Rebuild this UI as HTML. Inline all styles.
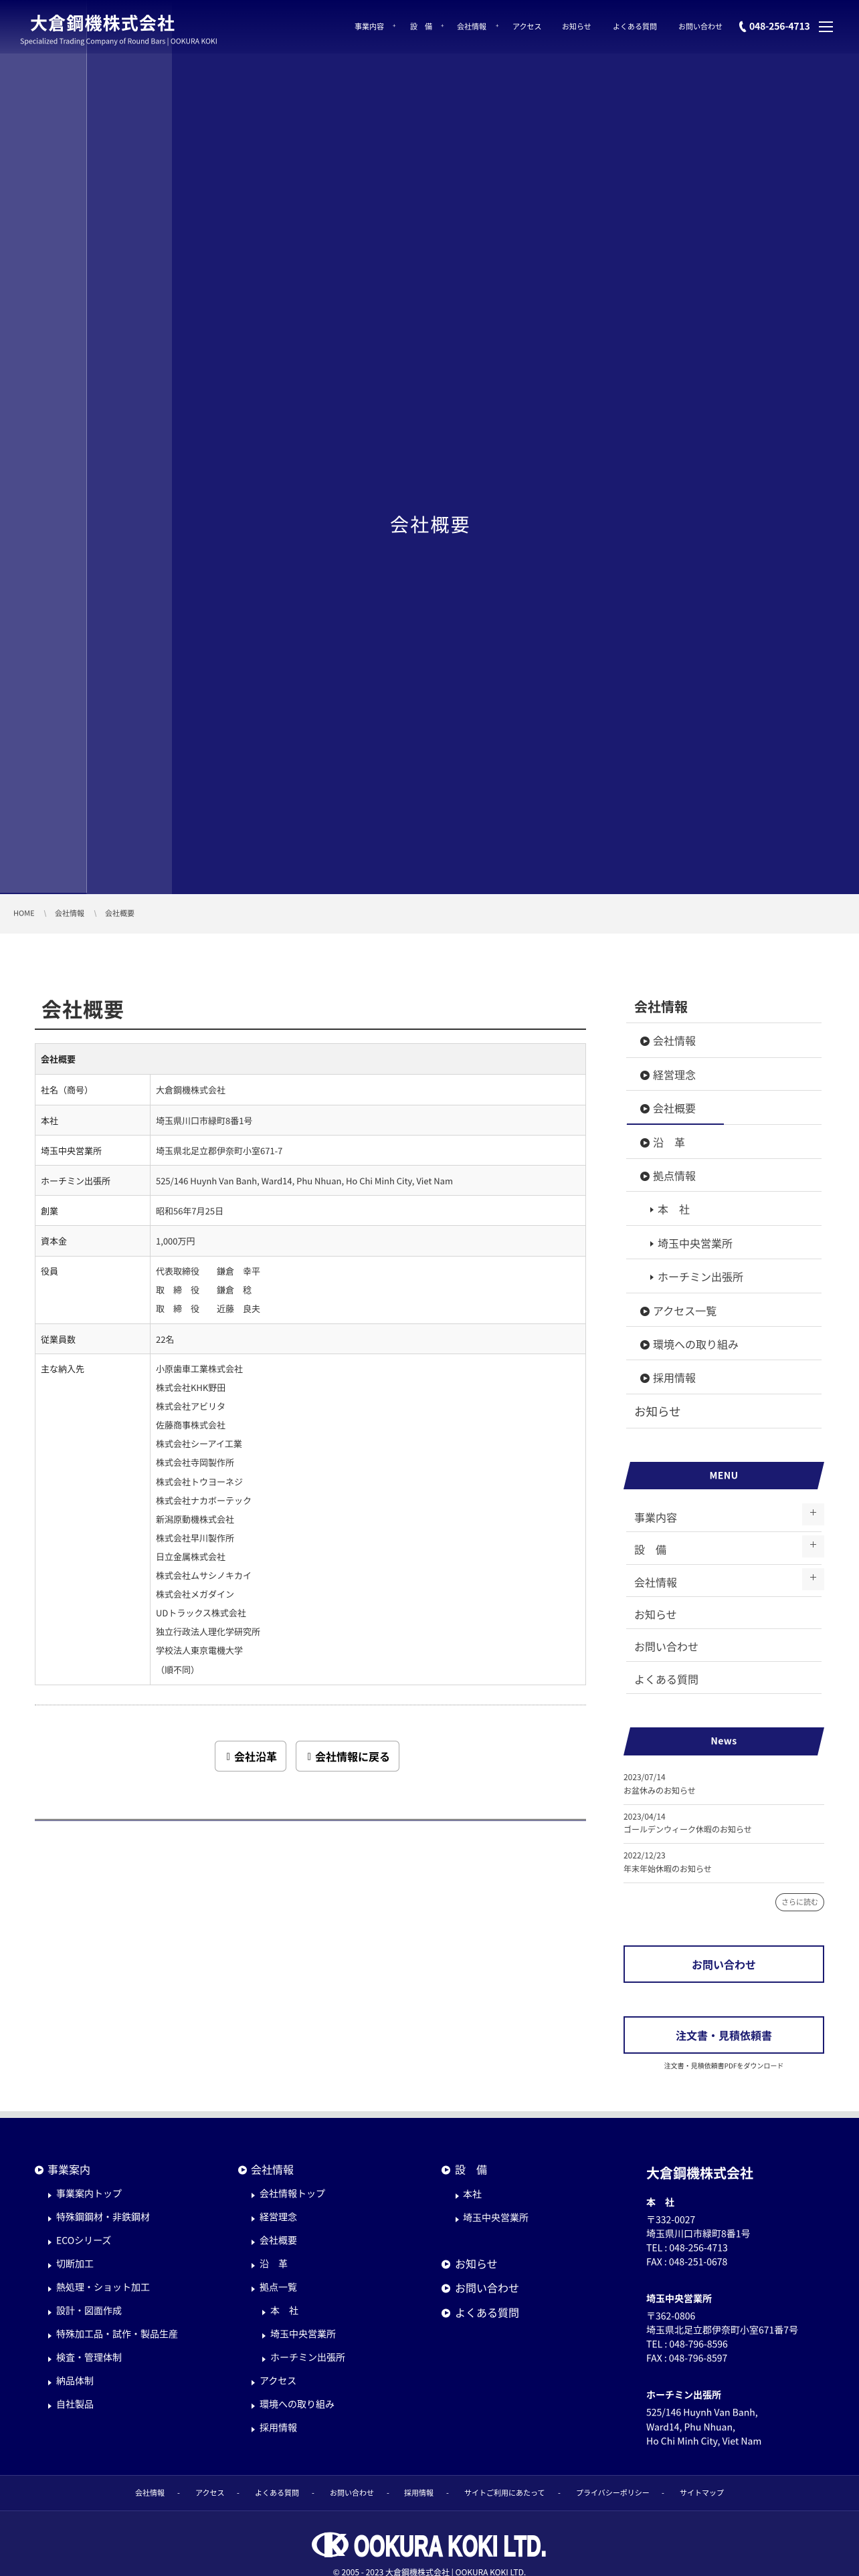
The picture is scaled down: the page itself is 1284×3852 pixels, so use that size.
<!DOCTYPE html>
<html lang="ja"><head><meta charset="utf-8"><title>会社概要 | 大倉鋼機株式会社</title>
<style>
*{box-sizing:border-box;margin:0;padding:0}
html,body{width:1284px;height:3852px;overflow:hidden;background:#fff}
body{position:relative;font-family:"Noto Sans CJK JP","Liberation Sans",sans-serif;color:#333}
.a{position:absolute}
.t{position:absolute;transform:translateY(-50%);white-space:nowrap;line-height:1.2}
.w{color:#fff}
.n{font-size:11px;color:#fff;top:40px}
.p{font-size:8px;color:#fff;top:39px}
.s{font-size:16px;color:#444}
.l{position:absolute;left:936px;width:292px;height:1px;background:#ddd}
.c{position:absolute;width:14px;height:14px;border-radius:50%;background:#333;transform:translateY(-50%)}
.c:after{content:"";position:absolute;left:5px;top:3.5px;border-left:6px solid #fff;border-top:3.5px solid transparent;border-bottom:3.5px solid transparent}
.r{position:absolute;transform:translateY(-50%);border-left:5px solid #333;border-top:4px solid transparent;border-bottom:4px solid transparent}
.band{position:absolute;left:932px;width:300px;background:#1a1a70;clip-path:polygon(10px 0,100% 0,290px 100%,0 100%)}
.band b{position:absolute;left:0;right:0;top:50%;transform:translateY(-50%);text-align:center;color:#fff;font-size:14px;letter-spacing:.4px;line-height:1.2}
.box{position:absolute;left:1199px;width:33px;background:#f7f7f7}
.box:before,.box:after{content:"";position:absolute;background:#555}
.box:before{left:12px;top:50%;width:9px;height:1px;margin-top:-4px}
.box:after{left:16px;top:50%;width:1px;height:9px;margin-top:-8px}
.d,.m{font-size:12px;color:#444}
.ft{font-size:16px;color:#fff}
.fs{font-size:14px;color:#fff}
.fc{position:absolute;width:13px;height:13px;border-radius:50%;background:#fff;transform:translateY(-50%)}
.fc:after{content:"";position:absolute;left:4.5px;top:3px;border-left:6px solid #00005a;border-top:3.5px solid transparent;border-bottom:3.5px solid transparent}
.fr{position:absolute;transform:translateY(-50%);border-left:5px solid #fff;border-top:4px solid transparent;border-bottom:4px solid transparent}
.fb{font-size:11px;color:#fff;top:3728px}
table{position:absolute;left:52px;top:1560px;width:824px;border-collapse:collapse;table-layout:fixed;font-size:13px;color:#333}
td,th{border:1px solid #d5d5d5;padding:0 8px;text-align:left;font-weight:400;vertical-align:middle}
th{color:#222}
td{padding-left:8px}
tr.g td,tr.g th{background:#f9f9f9}
tr.h th{background:#f2f2f2;font-weight:700}
.top td,.top th{vertical-align:top;padding-top:8px;line-height:28.1px}
.btn{position:absolute;top:2603px;height:46px;background:#fff;border:1px solid #aaa;border-radius:6px;font-size:16px;font-weight:700;color:#000;line-height:44px;white-space:nowrap}
.btn i{position:absolute;top:17px;width:4px;height:11px;border:1px solid #777}
.cta{position:absolute;left:932px;width:300px;height:56px;border:2px solid #1a1a70;text-align:center;font-size:16px;font-weight:700;color:#1a1a70;line-height:52px}
</style></head><body>

<!-- hero -->
<div class="a" style="left:0;top:0;width:1284px;height:1337px;background:#1a1a70"></div>
<div class="a" style="left:0;top:0;width:129px;height:1335px;background:#4b4b8b"></div>
<div class="a" style="left:129px;top:0;width:128px;height:1337px;background:#33337e"></div>
<div class="a" style="left:129px;top:0;width:1px;height:1335px;background:#8383b2"></div>
<div class="a" style="left:0;top:0;width:1284px;height:80px;background:linear-gradient(rgba(0,0,90,1),rgba(0,0,90,.22))"></div>

<div class="t w" style="left:45px;top:34px;font-size:26px;font-weight:700;letter-spacing:1.15px">大倉鋼機株式会社</div>
<div class="t w" style="left:30px;top:63px;font-size:10.6px;opacity:.9">Specialized Trading Company of Round Bars | OOKURA KOKI</div>

<div class="t n" style="left:530px">事業内容</div><div class="t p" style="left:587px">+</div>
<div class="t n" style="left:613px">設　備</div><div class="t p" style="left:659px">+</div>
<div class="t n" style="left:683px">会社情報</div><div class="t p" style="left:741px">+</div>
<div class="t n" style="left:766px">アクセス</div>
<div class="t n" style="left:840px">お知らせ</div>
<div class="t n" style="left:916px">よくある質問</div>
<div class="t n" style="left:1014px">お問い合わせ</div>
<svg class="a" style="left:1104px;top:31px" width="13" height="18" viewBox="0 0 13 18"><path d="M3.2 1 5.4.4 6.6 5 4.9 6C4.6 8 5.6 11 7 12.5L8.7 11.7 11.6 15.6 9.7 17C6.5 17.8 1 11 .9 5.6.9 3.6 1.8 1.8 3.2 1Z" fill="#fff"/></svg>
<div class="t w" style="left:1120px;top:40px;font-size:14px;font-weight:700;letter-spacing:-.2px">048-256-4713</div>
<div class="a" style="left:1224px;top:32px;width:21px;height:2px;background:#fff"></div>
<div class="a" style="left:1224px;top:39px;width:21px;height:2px;background:#fff"></div>
<div class="a" style="left:1224px;top:46px;width:21px;height:2px;background:#fff"></div>

<div class="t w" style="left:583px;top:785px;font-size:28px;letter-spacing:2.2px">会社概要</div>

<!-- breadcrumb -->
<div class="a" style="left:0;top:1337px;width:1284px;height:4px;background:#f3f3f8"></div>
<div class="a" style="left:0;top:1341px;width:1284px;height:55px;background:#f3f3f3"></div>
<div class="t" style="left:20px;top:1366px;font-size:11px;color:#444">HOME</div>
<div class="a" style="left:67px;top:1361px;width:1px;height:10px;background:#aaa;transform:rotate(-15deg)"></div>
<div class="t" style="left:82px;top:1366px;font-size:11px;color:#444">会社情報</div>
<div class="a" style="left:142px;top:1361px;width:1px;height:10px;background:#aaa;transform:rotate(-15deg)"></div>
<div class="t" style="left:157px;top:1366px;font-size:11px;color:#444">会社概要</div>

<!-- main -->
<div class="t" style="left:62px;top:1508px;font-size:30px;font-weight:700;letter-spacing:1px;color:#333">会社概要</div>
<div class="a" style="left:52px;top:1538px;width:824px;height:2px;background:#333"></div>

<table>
<colgroup><col style="width:172px"><col></colgroup>
<tr class="h" style="height:46px"><th colspan="2">会社概要</th></tr>
<tr style="height:46px"><th>社名（商号）</th><td>大倉鋼機株式会社</td></tr>
<tr class="g" style="height:45px"><th>本社</th><td>埼玉県川口市緑町8番1号</td></tr>
<tr style="height:45px"><th>埼玉中央営業所</th><td>埼玉県北足立郡伊奈町小室671-7</td></tr>
<tr class="g" style="height:45px"><th>ホーチミン出張所</th><td>525/146 Huynh Van Banh, Ward14, Phu Nhuan, Ho Chi Minh City, Viet Nam</td></tr>
<tr style="height:45px"><th>創業</th><td>昭和56年7月25日</td></tr>
<tr class="g" style="height:46px"><th>資本金</th><td>1,000万円</td></tr>
<tr class="top" style="height:101px"><th>役員</th><td>代表取締役　　鎌倉　幸平<br>取　締　役　　鎌倉　稔<br>取　締　役　　近藤　良夫</td></tr>
<tr class="g" style="height:45px"><th>従業員数</th><td>22名</td></tr>
<tr class="top" style="height:495px"><th>主な納入先</th><td>小原歯車工業株式会社<br>株式会社KHK野田<br>株式会社アビリタ<br>佐藤商事株式会社<br>株式会社シーアイ工業<br>株式会社寺岡製作所<br>株式会社トウヨーネジ<br>株式会社ナカボーテック<br>新潟原動機株式会社<br>株式会社早川製作所<br>日立金属株式会社<br>株式会社ムサシノキカイ<br>株式会社メガダイン<br>UDトラックス株式会社<br>独立行政法人理化学研究所<br>学校法人東京電機大学<br>（順不同）</td></tr>
</table>

<div class="a" style="left:52px;top:2549px;width:824px;height:0;border-top:1px dotted #999"></div>
<div class="btn" style="left:321px;width:107px;padding-left:28px"><i style="left:17px"></i>会社沿革</div>
<div class="btn" style="left:442px;width:155px;padding-left:28px"><i style="left:17px"></i>会社情報に戻る</div>
<div class="a" style="left:52px;top:2720px;width:824px;height:1px;background:#333"></div>
<div class="a" style="left:52px;top:2722px;width:824px;height:1px;background:#22225a"></div>

<!-- sidebar -->
<div class="t" style="left:948px;top:1505px;font-size:20px;font-weight:700;color:#333">会社情報</div>
<div class="l" style="top:1529px"></div><div class="l" style="top:1581px"></div><div class="l" style="top:1630px"></div><div class="l" style="top:1681px"></div><div class="l" style="top:1732px"></div><div class="l" style="top:1781px"></div><div class="l" style="top:1832px"></div><div class="l" style="top:1882px"></div><div class="l" style="top:1933px"></div><div class="l" style="top:1983px"></div><div class="l" style="top:2033px"></div><div class="l" style="top:2084px"></div><div class="l" style="top:2135px"></div>
<div class="a" style="left:937px;top:1680px;width:145px;height:2px;background:#1a1a70"></div>

<span class="c" style="left:957px;top:1557px"></span><div class="t s" style="left:976px;top:1556px">会社情報</div>
<span class="c" style="left:957px;top:1608px"></span><div class="t s" style="left:976px;top:1607px">経営理念</div>
<span class="c" style="left:957px;top:1658px"></span><div class="t s" style="left:976px;top:1657px">会社概要</div>
<span class="c" style="left:957px;top:1709px"></span><div class="t s" style="left:976px;top:1708px">沿　革</div>
<span class="c" style="left:957px;top:1759px"></span><div class="t s" style="left:976px;top:1758px">拠点情報</div>
<span class="r" style="left:972px;top:1809px"></span><div class="t s" style="left:983px;top:1808px">本　社</div>
<span class="r" style="left:972px;top:1860px"></span><div class="t s" style="left:983px;top:1859px">埼玉中央営業所</div>
<span class="r" style="left:972px;top:1910px"></span><div class="t s" style="left:983px;top:1909px">ホーチミン出張所</div>
<span class="c" style="left:957px;top:1961px"></span><div class="t s" style="left:976px;top:1960px">アクセス一覧</div>
<span class="c" style="left:957px;top:2011px"></span><div class="t s" style="left:976px;top:2010px">環境への取り組み</div>
<span class="c" style="left:957px;top:2061px"></span><div class="t s" style="left:976px;top:2060px">採用情報</div>
<div class="t" style="left:948px;top:2111px;font-size:17.5px;color:#444">お知らせ</div>

<div class="band" style="top:2186px;height:41px"><b>MENU</b></div>
<div class="box" style="top:2248px;height:33px"></div>
<div class="box" style="top:2296px;height:33px"></div>
<div class="box" style="top:2345px;height:33px"></div>
<div class="t s" style="left:948px;top:2269px">事業内容</div><div class="l" style="top:2290px"></div>
<div class="t s" style="left:948px;top:2317px">設　備</div><div class="l" style="top:2339px"></div>
<div class="t s" style="left:948px;top:2366px">会社情報</div><div class="l" style="top:2387px"></div>
<div class="t s" style="left:948px;top:2414px">お知らせ</div><div class="l" style="top:2435px"></div>
<div class="t s" style="left:948px;top:2462px">お問い合わせ</div><div class="l" style="top:2484px"></div>
<div class="t s" style="left:948px;top:2511px">よくある質問</div><div class="l" style="top:2532px"></div>

<div class="band" style="top:2583px;height:42px"><b>News</b></div>
<div class="t d" style="left:932px;top:2658px">2023/07/14</div>
<div class="t m" style="left:932px;top:2678px">お盆休みのお知らせ</div>
<div class="a" style="left:932px;top:2698px;width:300px;height:1px;background:#ddd"></div>
<div class="t d" style="left:932px;top:2717px">2023/04/14</div>
<div class="t m" style="left:932px;top:2736px">ゴールデンウィーク休暇のお知らせ</div>
<div class="a" style="left:932px;top:2756px;width:300px;height:1px;background:#ddd"></div>
<div class="t d" style="left:932px;top:2775px">2022/12/23</div>
<div class="t m" style="left:932px;top:2795px">年末年始休暇のお知らせ</div>
<div class="a" style="left:932px;top:2815px;width:300px;height:1px;background:#ddd"></div>
<div class="a" style="left:1159px;top:2831px;width:73px;height:27px;border:1px solid #444;border-radius:14px;text-align:center;font-size:11px;line-height:25px;color:#666">さらに読む</div>

<div class="cta" style="top:2909px">お問い合わせ</div>
<div class="cta" style="top:3015px">注文書・見積依頼書</div>
<div class="t" style="left:932px;width:300px;text-align:center;top:3089px;font-size:10px;color:#333">注文書・見積依頼書PDFをダウンロード</div>

<!-- footer -->
<div class="a" style="left:0;top:3157px;width:1284px;height:10px;background:#e0e2e2"></div>
<div class="a" style="left:0;top:3167px;width:1284px;height:534px;background:#00005a"></div>
<div class="a" style="left:0;top:3701px;width:1284px;height:53px;background:#13135f;border-top:1px solid #33337e"></div>
<div class="a" style="left:0;top:3754px;width:1284px;height:98px;background:#1b1b60;border-top:1px solid #33337e"></div>

<span class="fc" style="left:52px;top:3245px"></span><div class="t ft" style="left:71px;top:3244px">事業案内</div>
<span class="fr" style="left:72px;top:3283px"></span><div class="t fs" style="left:84px;top:3281px">事業案内トップ</div>
<span class="fr" style="left:72px;top:3318px"></span><div class="t fs" style="left:84px;top:3316px">特殊鋼鋼材・非鉄鋼材</div>
<span class="fr" style="left:72px;top:3353px"></span><div class="t fs" style="left:84px;top:3351px">ECOシリーズ</div>
<span class="fr" style="left:72px;top:3388px"></span><div class="t fs" style="left:84px;top:3386px">切断加工</div>
<span class="fr" style="left:72px;top:3423px"></span><div class="t fs" style="left:84px;top:3421px">熱処理・ショット加工</div>
<span class="fr" style="left:72px;top:3458px"></span><div class="t fs" style="left:84px;top:3456px">設計・図面作成</div>
<span class="fr" style="left:72px;top:3493px"></span><div class="t fs" style="left:84px;top:3491px">特殊加工品・試作・製品生産</div>
<span class="fr" style="left:72px;top:3528px"></span><div class="t fs" style="left:84px;top:3526px">検査・管理体制</div>
<span class="fr" style="left:72px;top:3563px"></span><div class="t fs" style="left:84px;top:3561px">納品体制</div>
<span class="fr" style="left:72px;top:3598px"></span><div class="t fs" style="left:84px;top:3596px">自社製品</div>

<span class="fc" style="left:356px;top:3245px"></span><div class="t ft" style="left:375px;top:3244px">会社情報</div>
<span class="fr" style="left:376px;top:3283px"></span><div class="t fs" style="left:388px;top:3281px">会社情報トップ</div>
<span class="fr" style="left:376px;top:3318px"></span><div class="t fs" style="left:388px;top:3316px">経営理念</div>
<span class="fr" style="left:376px;top:3353px"></span><div class="t fs" style="left:388px;top:3351px">会社概要</div>
<span class="fr" style="left:376px;top:3388px"></span><div class="t fs" style="left:388px;top:3386px">沿　革</div>
<span class="fr" style="left:376px;top:3423px"></span><div class="t fs" style="left:388px;top:3421px">拠点一覧</div>
<span class="fr" style="left:392px;top:3458px"></span><div class="t fs" style="left:404px;top:3456px">本　社</div>
<span class="fr" style="left:392px;top:3493px"></span><div class="t fs" style="left:404px;top:3491px">埼玉中央営業所</div>
<span class="fr" style="left:392px;top:3528px"></span><div class="t fs" style="left:404px;top:3526px">ホーチミン出張所</div>
<span class="fr" style="left:376px;top:3563px"></span><div class="t fs" style="left:388px;top:3561px">アクセス</div>
<span class="fr" style="left:376px;top:3598px"></span><div class="t fs" style="left:388px;top:3596px">環境への取り組み</div>
<span class="fr" style="left:376px;top:3633px"></span><div class="t fs" style="left:388px;top:3631px">採用情報</div>

<span class="fc" style="left:660px;top:3245px"></span><div class="t ft" style="left:680px;top:3244px">設　備</div>
<span class="fr" style="left:681px;top:3284px"></span><div class="t fs" style="left:692px;top:3282px">本社</div>
<span class="fr" style="left:681px;top:3319px"></span><div class="t fs" style="left:692px;top:3317px">埼玉中央営業所</div>
<span class="fc" style="left:660px;top:3386px"></span><div class="t ft" style="left:680px;top:3385px">お知らせ</div>
<span class="fc" style="left:660px;top:3422px"></span><div class="t ft" style="left:680px;top:3421px">お問い合わせ</div>
<span class="fc" style="left:660px;top:3459px"></span><div class="t ft" style="left:680px;top:3458px">よくある質問</div>

<div class="t w" style="left:966px;top:3249px;font-size:20px;font-weight:700">大倉鋼機株式会社</div>
<div class="t fs" style="left:966px;top:3294px;font-weight:700">本　社</div>
<div class="t fs" style="left:966px;top:3320px">〒332-0027</div>
<div class="t fs" style="left:966px;top:3341px">埼玉県川口市緑町8番1号</div>
<div class="t fs" style="left:966px;top:3362px">TEL : 048-256-4713</div>
<div class="t fs" style="left:966px;top:3383px">FAX : 048-251-0678</div>
<div class="t fs" style="left:966px;top:3438px;font-weight:700">埼玉中央営業所</div>
<div class="t fs" style="left:966px;top:3464px">〒362-0806</div>
<div class="t fs" style="left:966px;top:3485px">埼玉県北足立郡伊奈町小室671番7号</div>
<div class="t fs" style="left:966px;top:3506px">TEL : 048-796-8596</div>
<div class="t fs" style="left:966px;top:3527px">FAX : 048-796-8597</div>
<div class="t fs" style="left:966px;top:3582px;font-weight:700">ホーチミン出張所</div>
<div class="t fs" style="left:966px;top:3608px">525/146 Huynh Van Banh,</div>
<div class="t fs" style="left:966px;top:3630px">Ward14, Phu Nhuan,</div>
<div class="t fs" style="left:966px;top:3651px">Ho Chi Minh City, Viet Nam</div>

<div class="t fb" style="left:202px">会社情報</div><div class="t fb" style="left:265px">-</div>
<div class="t fb" style="left:292px">アクセス</div><div class="t fb" style="left:354px">-</div>
<div class="t fb" style="left:381px">よくある質問</div><div class="t fb" style="left:466px">-</div>
<div class="t fb" style="left:493px">お問い合わせ</div><div class="t fb" style="left:578px">-</div>
<div class="t fb" style="left:604px">採用情報</div><div class="t fb" style="left:667px">-</div>
<div class="t fb" style="left:694px">サイトご利用にあたって</div><div class="t fb" style="left:834px">-</div>
<div class="t fb" style="left:861px">プライバシーポリシー</div><div class="t fb" style="left:989px">-</div>
<div class="t fb" style="left:1016px">サイトマップ</div>

<svg class="a" style="left:466px;top:3786px" width="356" height="40" viewBox="0 0 356 40">
<ellipse cx="27.5" cy="19" rx="27.5" ry="18.5" fill="#fff"/>
<ellipse cx="27.5" cy="19" rx="20" ry="15.5" fill="#1b1b60"/>
<path d="M19 1H31V15L43 3H52L37 19 50 36H40L31 24V38H19Z" fill="#fff"/>
<text x="63" y="36" font-family="Liberation Sans,sans-serif" font-weight="700" font-size="44" fill="#fff" stroke="#fff" stroke-width="2" textLength="288" lengthAdjust="spacingAndGlyphs">OOKURA KOKI LTD.</text>
</svg>
<div class="t" style="left:0;width:1284px;text-align:center;top:3847px;font-size:12px;color:#fff">© 2005 - 2023 大倉鋼機株式会社 | OOKURA KOKI LTD.</div>
</body></html>
